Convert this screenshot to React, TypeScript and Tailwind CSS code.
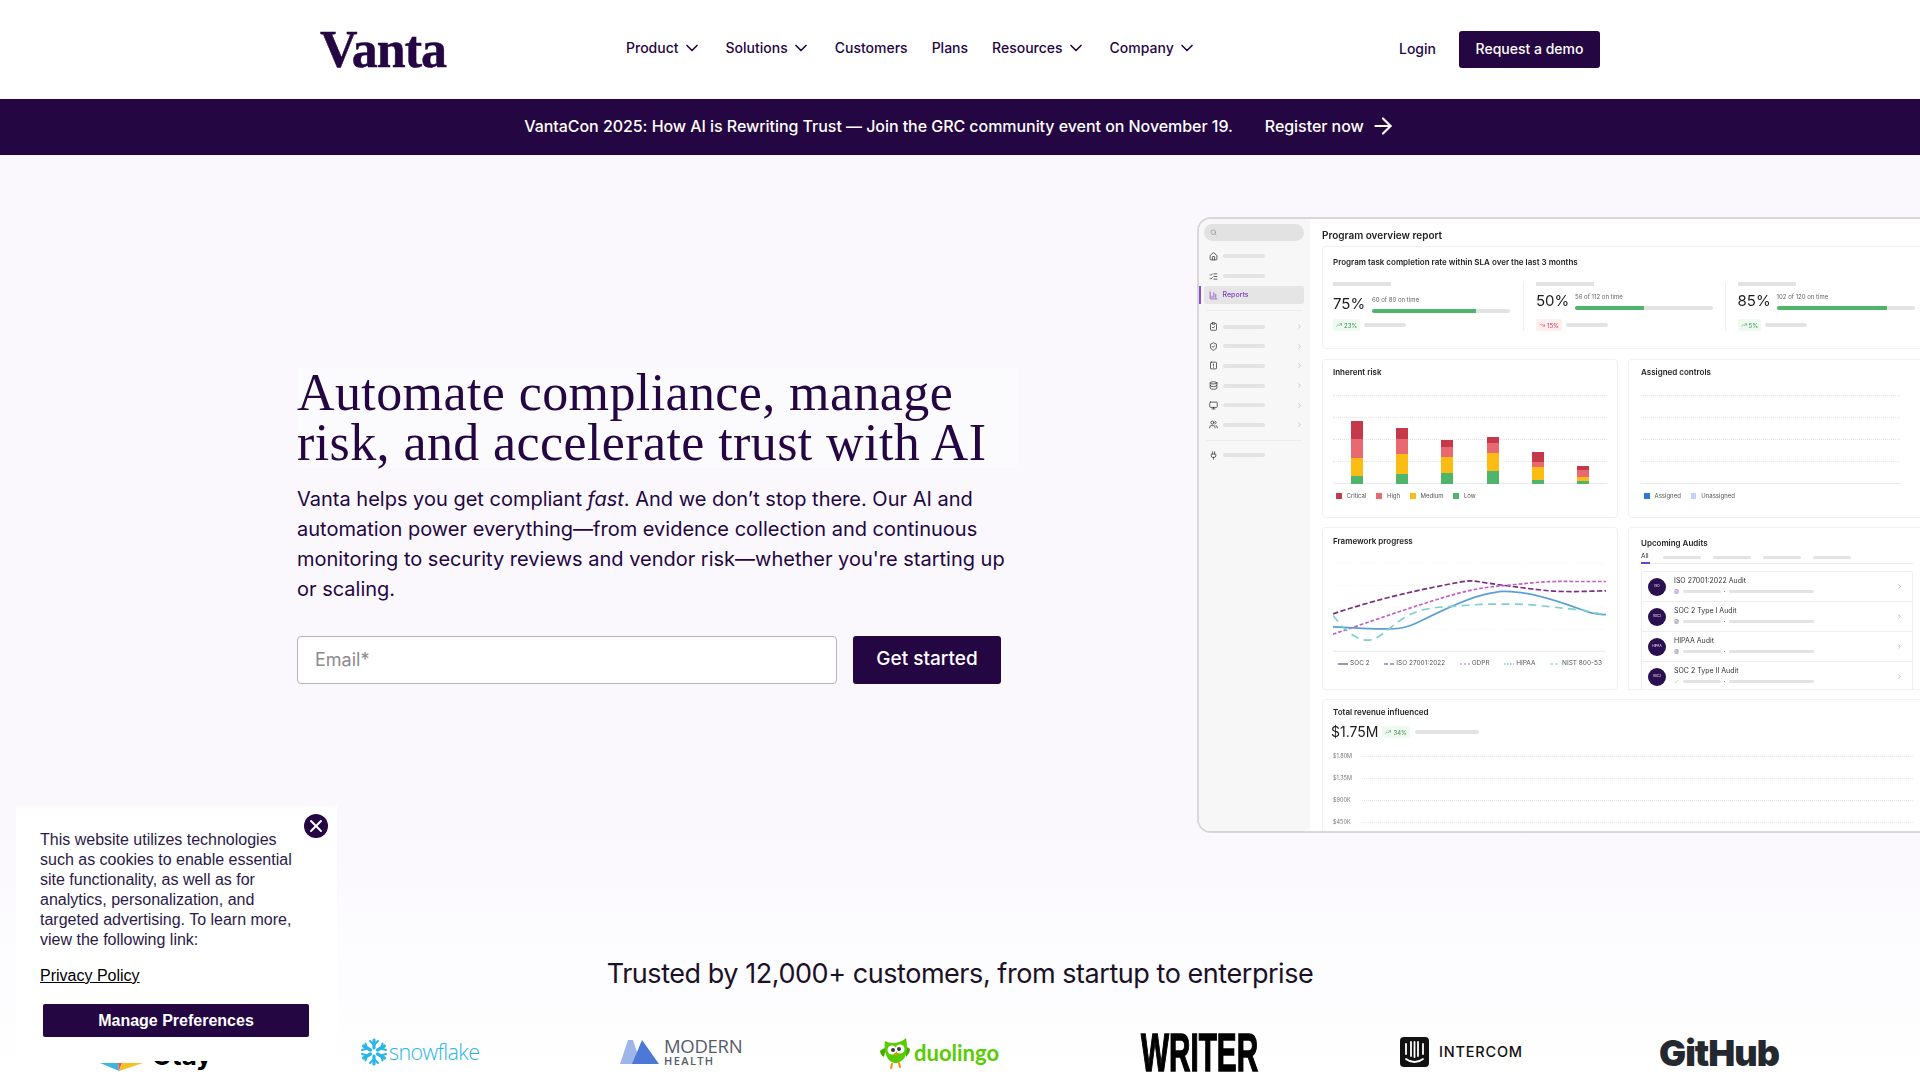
import { Check, ChevronDown, ChevronRight, ArrowRight, Search, Home, ListChecks, ChartColumn, ClipboardCheck, ShieldCheck, Database, Monitor, Users, Plug, TrendingUp, TrendingDown, FileText, X } from 'lucide-react';

const SquareBang = ({ size }: { size: number }) => (
  <svg width={size} height={size} viewBox="0 0 24 24" fill="none" stroke="currentColor" strokeWidth="2" strokeLinecap="round">
    <rect x="4" y="3" width="16" height="18" rx="2" />
    <path d="M12 8V13M12 16.5V17" />
  </svg>
);

const NAV = [
  { label: 'Product', menu: true },
  { label: 'Solutions', menu: true },
  { label: 'Customers', menu: false },
  { label: 'Plans', menu: false },
  { label: 'Resources', menu: true },
  { label: 'Company', menu: true },
];

const SIDE_GROUP = [ClipboardCheck, ShieldCheck, SquareBang, Database, Monitor, Users];

const STATS = [
  { pct: '75%', note: '60 of 80 on time', fill: 75, delta: '23%', up: true, offset: 'pt-[8px]', chipGap: 'mt-[5px]' },
  { pct: '50%', note: '56 of 112 on time', fill: 50, delta: '15%', up: false, offset: 'pt-[5px]', chipGap: 'mt-[8px]' },
  { pct: '85%', note: '102 of 120 on time', fill: 80, delta: '5%', up: true, offset: 'pt-[5px]', chipGap: 'mt-[8px]' },
];

const BARS = [
  [18.7, 18.3, 18.3, 8],
  [11, 15, 19.7, 10],
  [7, 10, 16, 11],
  [6.7, 9.7, 18.3, 12.7],
  [10.3, 5.3, 12.3, 4.3],
  [3.7, 7, 4, 3.3],
];

const RISK = ['#c5394b', '#e8696f', '#fbbc13', '#4fb56d'];

const AUDITS = ['ISO 27001:2022 Audit', 'SOC 2 Type I Audit', 'HIPAA Audit', 'SOC 2 Type II Audit'];

const Bar = ({ className }: { className: string }) => <div className={`rounded-full bg-[#e3e2e4] ${className}`} />;

const GridLines = ({ className }: { className: string }) => (
  <div className={`flex flex-col justify-between ${className}`}>
    {[0, 1, 2, 3].map((i) => (
      <div key={i} className="border-t border-dotted border-[#e4e4e6]" />
    ))}
    <div className="border-t border-[#e8e8ea]" />
  </div>
);

const Sidebar = () => (
  <div className="flex w-[111px] shrink-0 flex-col bg-[#f8f7f8] pl-[5px] pr-[6px] pt-[5px] text-[#333]">
    <div className="flex h-[17px] items-center rounded-full bg-[#e3e2e3] pl-[6px]">
      <Search size={7} className="text-[#888]" />
    </div>
    <div className="mt-[5px] flex h-[20px] items-center gap-[4.5px] pl-[5px]">
      <Home size={9} />
      <Bar className="h-[4px] w-[42px]" />
    </div>
    <div className="flex h-[20px] items-center gap-[4.5px] pl-[5px]">
      <ListChecks size={9} />
      <Bar className="h-[4px] w-[42px]" />
    </div>
    <div className="relative flex h-[18px] items-center gap-[4.5px] rounded-[3px] bg-[#e6e5e6] pl-[5px] text-[#7c3fc4]">
      <div className="absolute left-[-5px] top-0 h-full w-[1.5px] bg-[#8a4bd1]" />
      <ChartColumn size={9} />
      <span className="text-[7px] font-medium">Reports</span>
    </div>
    <div className="mx-[2px] my-[6px] border-t border-[#ececec]" />
    <div className="flex flex-col">
      {SIDE_GROUP.map((Icon, i) => (
        <div key={i} className="flex h-[19.6px] items-center gap-[4.5px] pl-[5px]">
          <Icon size={9} />
          <Bar className="h-[4px] w-[42px]" />
          <ChevronRight size={7} className="ml-[27px] text-[#aaa]" />
        </div>
      ))}
    </div>
    <div className="mx-[2px] mb-[5px] mt-[5px] border-t border-[#ececec]" />
    <div className="flex h-[19px] items-center gap-[4.5px] pl-[5px]">
      <Plug size={9} />
      <Bar className="h-[4px] w-[42px]" />
    </div>
  </div>
);

const StatCol = ({ pct, note, fill, delta, up, offset, chipGap, first }: (typeof STATS)[number] & { first: boolean }) => (
  <div className={`shrink-0 ${first ? 'w-[190px]' : 'w-[201.6px] border-l border-[#eeeeef] pl-[12px]'}`}>
    <Bar className="h-[4px] w-[58px] rounded-none" />
    <div className={`flex items-center gap-[9px] ${offset}`}>
      <div className="w-[30px] text-[15px] leading-[20px] text-[#1b1b1f]">{pct}</div>
      <div className="w-[138px]">
        <div className="text-[6px] leading-[8px] text-[#666]">{note}</div>
        <div className="mt-[5px] flex h-[4px] overflow-hidden rounded-full bg-[#e3e2e4]">
          <div className="h-full bg-[#4fb56d]" style={{ width: `${fill}%` }} />
        </div>
      </div>
    </div>
    <div className={`flex items-center gap-[4px] ${chipGap}`}>
      <div className={`flex h-[12px] items-center gap-[2px] rounded-[2px] px-[3px] text-[6px] ${up ? 'bg-[#eef9f0] text-[#3d8f55]' : 'bg-[#fdeff0] text-[#c5394b]'}`}>
        {up ? <TrendingUp size={6} /> : <TrendingDown size={6} />}
        {delta}
      </div>
      <Bar className="h-[4px] w-[42px]" />
    </div>
  </div>
);

const Legend = ({ items }: { items: { color: string; label: string }[] }) => (
  <div className="flex gap-[10px] pl-[3px] text-[6px] text-[#555]">
    {items.map((item) => (
      <div key={item.label} className="flex items-center gap-[5px]">
        <div className="h-[6px] w-[5.5px]" style={{ background: item.color }} />
        {item.label}
      </div>
    ))}
  </div>
);

const InherentRisk = () => (
  <div className="h-[159px] w-[296px] shrink-0 rounded-[4px] border border-[#f0eff1] bg-white px-[10px] pt-[7px]">
    <div className="text-[8px] font-semibold leading-[10px] text-[#222]">Inherent risk</div>
    <div className="relative mt-[18px] h-[89px] w-[274px]">
      <GridLines className="absolute inset-0" />
      <div className="absolute inset-0 flex items-end justify-between px-[18px]">
        {BARS.map((stack, i) => (
          <div key={i} className="flex w-[12px] flex-col">
            {stack.map((h, j) => (
              <div key={j} style={{ height: h, background: RISK[j] }} />
            ))}
          </div>
        ))}
      </div>
    </div>
    <div className="mt-[7px]">
      <Legend
        items={[
          { color: RISK[0], label: 'Critical' },
          { color: RISK[1], label: 'High' },
          { color: RISK[2], label: 'Medium' },
          { color: RISK[3], label: 'Low' },
        ]}
      />
    </div>
  </div>
);

const AssignedControls = () => (
  <div className="h-[159px] w-[296px] shrink-0 rounded-[4px] border border-[#f0eff1] bg-white px-[12px] pt-[7px]">
    <div className="text-[8px] font-semibold leading-[10px] text-[#222]">Assigned controls</div>
    <GridLines className="mt-[18px] h-[89px] w-[259px]" />
    <div className="mt-[7px]">
      <Legend
        items={[
          { color: '#2f77d8', label: 'Assigned' },
          { color: '#bcd5f3', label: 'Unassigned' },
        ]}
      />
    </div>
  </div>
);

const FrameworkChart = () => (
  <svg viewBox="42 120 818 290" className="block h-[97px] w-[273px]" fill="none">
    <g stroke="#eaeaec" strokeWidth="2" strokeDasharray="3 6">
      <path d="M42 130H860" />
      <path d="M42 196H860" />
      <path d="M42 261H860" />
      <path d="M42 327H860" />
    </g>
    <path d="M42 393H860" stroke="#e8e8ea" strokeWidth="3" />
    <path d="M42 281C150 245 250 220 350 200S450 180 480 185 620 205 680 211 800 213 860 212" stroke="#7a2f80" strokeWidth="5" strokeDasharray="16 7" />
    <path d="M42 342C150 305 280 260 380 230S520 200 590 193 680 183 760 184L860 184" stroke="#c35fc4" strokeWidth="5" strokeDasharray="11 6" />
    <path d="M42 320C80 320 100 325 170 326S260 325 300 305 440 235 500 222 560 214 590 216 680 232 740 252 820 285 860 283" stroke="#5a9fd6" strokeWidth="5" />
    <path d="M42 285C70 325 110 360 145 360S210 320 260 290 360 262 420 257 520 251 590 252 700 262 760 267 830 282 860 282" stroke="#7fd0cf" strokeWidth="5" strokeDasharray="24 16" />
  </svg>
);

const LEGEND_LINES = [
  { label: 'SOC 2', color: '#4a1a6a', dash: '' },
  { label: 'ISO 27001:2022', color: '#7a2f80', dash: '4 2' },
  { label: 'GDPR', color: '#c35fc4', dash: '2 2' },
  { label: 'HIPAA', color: '#5a9fd6', dash: '1.5 1.5' },
  { label: 'NIST 800-53', color: '#7fd0cf', dash: '3 2' },
];

const FrameworkProgress = () => (
  <div className="h-[163px] w-[296px] shrink-0 rounded-[4px] border border-[#f0eff1] bg-white px-[10px] pt-[8px]">
    <div className="text-[8px] font-semibold leading-[10px] text-[#222]">Framework progress</div>
    <div className="mt-[14px]">
      <FrameworkChart />
    </div>
    <div className="mt-[2px] flex justify-between px-[5px] text-[6.5px] text-[#555]">
      {LEGEND_LINES.map((line) => (
        <div key={line.label} className="flex items-center gap-[2px]">
          <svg width="10" height="4" viewBox="0 0 10 4">
            <path d="M0 2H10" stroke={line.color} strokeWidth="1.2" strokeDasharray={line.dash || undefined} />
          </svg>
          {line.label}
        </div>
      ))}
    </div>
  </div>
);

const UpcomingAudits = () => (
  <div className="h-[163px] w-[296px] shrink-0 overflow-hidden rounded-t-[4px] border border-[#f0eff1] bg-white pl-[12px] pr-[10px] pt-[10px]">
    <div className="text-[8px] font-semibold leading-[10px] text-[#222]">Upcoming Audits</div>
    <div className="mt-[4px] flex h-[12px] items-start gap-[12px] border-b border-[#e8e8ea]">
      <div className="relative h-[11px] w-[10px] text-[6.5px] leading-[8px] text-[#333]">
        All
        <div className="absolute bottom-[-1px] left-0 h-[2px] w-[9px] bg-[#6e3fc9]" />
      </div>
      <Bar className="mt-[4px] h-[3px] w-[38px]" />
      <Bar className="mt-[4px] h-[3px] w-[38px]" />
      <Bar className="mt-[4px] h-[3px] w-[38px]" />
      <Bar className="mt-[4px] h-[3px] w-[38px]" />
    </div>
    <div className="mt-[7px] rounded-t-[2px] border border-b-0 border-[#eeeeef]">
      {AUDITS.map((audit, i) => (
        <div key={audit} className="flex h-[30px] items-center border-b border-[#eeeeef] pl-[6px] pr-[9px]">
          <div className="flex h-[18px] w-[18px] shrink-0 items-center justify-center rounded-full bg-[#2a1050] text-[3px] text-white">
            {i === 2 ? 'HIPAA' : i === 0 ? 'ISO' : 'SOC2'}
          </div>
          <div className="ml-[8px] flex-1 self-start pt-[4px]">
            <div className="text-[7px] leading-[10px] text-[#333]">{audit}</div>
            <div className="mt-[3px] flex items-center gap-[3px]">
              {i === 3 ? <Check size={5} className="text-[#4fb56d]" /> : <FileText size={5} className={i === 0 ? 'text-[#8a4bd1]' : 'text-[#666]'} />}
              <Bar className="ml-[1px] h-[3px] w-[38px]" />
              <div className="h-[1px] w-[1px] bg-[#888]" />
              <Bar className="ml-[1px] h-[3px] w-[85px]" />
            </div>
          </div>
          <ChevronRight size={7} className="text-[#888]" />
        </div>
      ))}
    </div>
  </div>
);

const RevenueCard = () => (
  <div className="h-[140px] w-[602px] shrink-0 rounded-[4px] border border-[#f0eff1] bg-white px-[10px] pt-[7px]">
    <div className="text-[8px] font-semibold leading-[10px] text-[#222]">Total revenue influenced</div>
    <div className="mt-[5px] flex items-center gap-[4px]">
      <div className="ml-[-2px] text-[14px] leading-[20px] text-[#1b1b1f]">$1.75M</div>
      <div className="flex h-[12px] items-center gap-[2px] rounded-[2px] bg-[#eef9f0] px-[3px] text-[6px] text-[#3d8f55]">
        <TrendingUp size={6} />
        34%
      </div>
      <Bar className="ml-[1px] h-[4px] w-[64px]" />
    </div>
    <div className="mt-[10px] flex flex-col gap-[14px]">
      {['$1.80M', '$1.35M', '$900K', '$450K'].map((tick) => (
        <div key={tick} className="flex h-[8px] items-center">
          <span className="w-[29px] text-[5.5px] text-[#777]">{tick}</span>
          <div className="flex-1 border-t border-dotted border-[#e4e4e6]" />
        </div>
      ))}
    </div>
  </div>
);

const Dashboard = () => (
  <div className="flex h-[616px] w-[760px] shrink-0 overflow-hidden rounded-l-[14px] border-2 border-r-0 border-[#d8d6db] bg-white font-['Inter',sans-serif] blur-[0.3px]">
    <Sidebar />
    <div className="flex-1 pl-[12px] pt-[7px]">
      <div className="text-[10px] font-semibold leading-[18px] text-[#222]">Program overview report</div>
      <div className="mt-[2px] h-[103px] w-[602px] rounded-[4px] border border-[#f0eff1] bg-white pl-[10px] pt-[10px]">
        <div className="text-[8px] font-semibold leading-[10px] text-[#222]">
          Program task completion rate within SLA over the last 3 months
        </div>
        <div className="mt-[15px] flex">
          {STATS.map((stat, i) => (
            <StatCol key={stat.pct} {...stat} first={i === 0} />
          ))}
        </div>
      </div>
      <div className="mt-[10px] flex gap-[10px]">
        <InherentRisk />
        <AssignedControls />
      </div>
      <div className="mt-[9px] flex gap-[10px]">
        <FrameworkProgress />
        <UpcomingAudits />
      </div>
      <div className="mt-[9px]">
        <RevenueCard />
      </div>
    </div>
  </div>
);

const CustomerLogos = () => (
  <div className="relative h-[50px]">
    {/* first logo sits mostly under the cookie panel */}
    <svg className="absolute left-[100px] top-[35px]" width="43" height="8" viewBox="0 0 43 8">
      <path d="M0 0H18L19 8Z" fill="#3fb4e0" />
      <path d="M18 0H22L19 8Z" fill="#e85a5a" />
      <path d="M22 0H43L19 8Z" fill="#f6c11f" />
    </svg>
    <span className="absolute left-[152px] top-[12px] font-['Inter',sans-serif] text-[26px] font-bold leading-[32px] text-black">Otay</span>
    <div className="absolute left-[360px] top-[10px] flex items-center gap-[1px]">
      <svg width="28" height="28" viewBox="0 0 28 28" fill="none" stroke="#29b5e8" strokeWidth="3.2" strokeLinecap="round">
        <path d="M14 2V10M14 18V26M3.6 8L10.5 12M17.5 16L24.4 20M3.6 20L10.5 16M17.5 12L24.4 8" />
        <path d="M10 3L14 7L18 3M10 25L14 21L18 25M2 12L7 10.5L5.5 5.5M2 16L7 17.5L5.5 22.5M26 12L21 10.5L22.5 5.5M26 16L21 17.5L22.5 22.5" strokeWidth="2" />
      </svg>
      <span className="font-['Open_Sans',sans-serif] text-[21.5px] font-light leading-[28px] tracking-[-0.6px] text-[#29b5e8]">snowflake</span>
    </div>
    <div className="absolute left-[620px] top-[9px] flex items-center gap-[5px]">
      <svg width="39" height="24" viewBox="0 0 39 24">
        <path d="M8 0H13L21 24H0Z" fill="#9db5e8" />
        <path d="M22 0L39 24H12Z" fill="#4d78d6" />
      </svg>
      <div className="font-['Open_Sans',sans-serif] text-[#555c66]">
        <div className="text-[18.5px] leading-[18px] tracking-[-0.3px]">MODERN</div>
        <div className="text-[11px] font-semibold leading-[11px] tracking-[1.4px]">HEALTH</div>
      </div>
    </div>
    <div className="absolute left-[879px] top-[9px] flex items-center gap-[3px]">
      <svg width="32" height="32" viewBox="0 0 32 32">
        <path d="M1 14C3 12 5 11 7 11L5 20C3 19 1 17 1 14Z" fill="#4aa802" />
        <path d="M31 12C29 10 27 10 26 10L27 20C29 18 31 15 31 12Z" fill="#4aa802" />
        <path d="M6 4C11 7 21 7 27 1C29 11 29 23 18 26C9 27 4 16 6 4Z" fill="#58cc02" />
        <circle cx="13" cy="13" r="4.5" fill="#fff" />
        <circle cx="21" cy="12" r="4.5" fill="#fff" />
        <circle cx="14" cy="13" r="2" fill="#3c3c3c" />
        <circle cx="20" cy="12" r="2" fill="#3c3c3c" />
        <path d="M15 16H19L17 20Z" fill="#f49000" />
        <path d="M13 27L12 31M20 26L21 30" stroke="#f49000" strokeWidth="2" strokeLinecap="round" />
      </svg>
      <span className="font-['Lato',sans-serif] text-[22px] font-bold leading-[30px] text-[#58cc02]">duolingo</span>
    </div>
    <div className="absolute left-[1141px] top-[0px] origin-left scale-x-[0.55] whitespace-nowrap font-['Liberation_Sans',sans-serif] text-[54px] font-bold leading-[48px] text-black [-webkit-text-stroke:1.5px_black]">
      WRITER
    </div>
    <div className="absolute left-[1400px] top-[9px] flex items-center gap-[10px]">
      <svg width="29" height="30" viewBox="0 0 29 30">
        <rect width="29" height="30" rx="4" fill="#111" />
        <path d="M6 7V17M11 5V19M14.5 5V20M18 5V19M23 7V17" stroke="#fff" strokeWidth="1.8" strokeLinecap="round" />
        <path d="M6 22C11 26 18 26 23 22" stroke="#fff" strokeWidth="1.8" fill="none" strokeLinecap="round" />
      </svg>
      <span className="font-['Inter',sans-serif] text-[14.5px] font-medium tracking-[0.8px] text-[#111]">INTERCOM</span>
    </div>
    <div className="absolute left-[1659px] top-[1px] font-['Inter',sans-serif] text-[36px] font-black leading-[48px] tracking-[-1px] text-[#24292f]">
      GitHub
    </div>
  </div>
);

const CookiePanel = () => (
  <div className="absolute left-[16px] top-[806px] h-[255px] w-[321px] bg-white pl-[24px] pt-[24px] font-['Liberation_Sans',sans-serif] text-[16px] leading-[20px] text-[#2b1a47]">
    <button className="absolute right-[9px] top-[8px] flex h-[24px] w-[24px] items-center justify-center rounded-full bg-[#240642] text-white">
      <X size={20} strokeWidth={2.4} />
    </button>
    <p className="w-[262px]">
      This website utilizes technologies such as cookies to enable essential site functionality, as well as for
      analytics, personalization, and targeted advertising. To learn more, view the following link:
    </p>
    <a className="mt-[16px] block text-black underline">Privacy Policy</a>
    <button className="ml-[3px] mt-[18px] h-[33px] w-[266px] rounded-[2px] bg-[#240642] text-center font-bold text-white">
      Manage Preferences
    </button>
  </div>
);

export default function App() {
  return (
    <div className="relative h-[1080px] w-[1920px] overflow-hidden bg-[#faf8fd] font-['Inter',sans-serif] text-[#240642]">
      <header className="flex h-[99px] items-center bg-white pl-[320px]">
        <div className="w-[306px] font-['Liberation_Serif',serif] text-[52px] font-bold leading-none tracking-[-1px] [-webkit-text-stroke:0.5px_#240642]">Vanta</div>
        <nav className="flex w-[773px] items-center gap-[24px] pb-[4px] text-[14px] font-medium">
          {NAV.map((item) => (
            <div key={item.label} className="flex items-center gap-[3px]">
              {item.label}
              {item.menu && <ChevronDown size={20} strokeWidth={2} />}
            </div>
          ))}
        </nav>
        <div className="w-[60px] pb-[2px] text-[14px] font-medium">Login</div>
        <button className="h-[37px] w-[141px] rounded-[3px] bg-[#240642] pb-[2px] text-[14px] font-medium text-white">Request a demo</button>
      </header>
      <div className="flex h-[56px] items-center justify-center gap-[32px] bg-[#240642] pb-[2px] text-[16px] font-medium tracking-[-0.05px] text-white">
        <span>VantaCon 2025: How AI is Rewriting Trust — Join the GRC community event on November 19.</span>
        <span className="flex items-center gap-[6px]">
          Register now
          <ArrowRight size={26} strokeWidth={2} />
        </span>
      </div>
      <main className="flex h-[677px] pl-[297px] pt-[62px]">
        <div className="w-[900px] shrink-0 pt-[151px]">
          <h1 className="w-[720px] bg-[#fbfafd] font-['Liberation_Serif',serif] text-[52px] font-normal leading-[50px] tracking-[0.4px]">
            Automate compliance, manage risk, and accelerate trust with AI
          </h1>
          <p className="mt-[16px] w-[720px] text-[20px] leading-[30px]">
            Vanta helps you get compliant <em>fast</em>. And we don’t stop there. Our AI and automation power
            everything—from evidence collection and continuous monitoring to security reviews and vendor risk—whether
            you're starting up or scaling.
          </p>
          <div className="mt-[32px] flex gap-[16px]">
            <div className="flex h-[48px] w-[540px] items-center rounded-[4px] border border-[#b5b3b9] bg-white pb-[1px] pl-[17px] text-[18px] text-[#8b8b8f]">Email*</div>
            <button className="h-[48px] w-[148px] rounded-[3px] bg-[#240642] pb-[2px] text-[19px] font-medium text-white">Get started</button>
          </div>
        </div>
        <Dashboard />
      </main>
      <section className="h-[248px] bg-linear-to-b from-[#faf8fd] to-white pt-[124px]">
        <div className="text-center text-[27px] leading-[36px] tracking-[-0.45px] text-[#1a1128]">Trusted by 12,000+ customers, from startup to enterprise</div>
        <div className="mt-[36px]">
          <CustomerLogos />
        </div>
      </section>
      <CookiePanel />
    </div>
  );
}
